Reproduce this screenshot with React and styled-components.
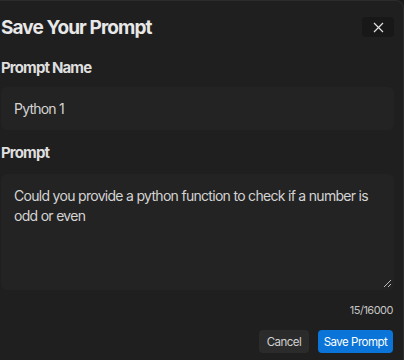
import React from "react";
import styled, { createGlobalStyle } from "styled-components";

const Global = createGlobalStyle`
  html, body { margin: 0; padding: 0; background: #1a1a1a; }
  body { font-family: Inter, "Noto Sans", sans-serif; overflow: hidden; }
  * { box-sizing: border-box; }
`;

const Dialog = styled.div`
  width: 404px;
  height: 360px;
  background: #1f1f1f;
  border-top: 1px solid #2c2c2c;
  border-right: 1px solid #2c2c2c;
  border-top-right-radius: 8px;
  padding: 15px 9px 0 1px;
  display: flex;
  flex-direction: column;
  color: #e6e6e6;
`;

const Header = styled.div`
  display: flex;
  align-items: center;
  justify-content: space-between;
  height: 22px;
`;

const Title = styled.h2`
  margin: 0;
  font-size: 19px;
  font-weight: 700;
  letter-spacing: -0.9px;
  color: #e8e8e8;
`;

const CloseButton = styled.button`
  width: 32px;
  height: 20px;
  border: none;
  border-radius: 4px;
  background: #181818;
  display: flex;
  align-items: center;
  justify-content: center;
  padding: 0;
  color: #d8d8d8;
`;

const Label = styled.div`
  font-size: 15px;
  font-weight: 700;
  letter-spacing: -0.85px;
  color: #dedede;
  margin-top: ${(p) => p.$top}px;
  line-height: 18px;
`;

const Input = styled.div`
  margin-top: 10px;
  height: 43px;
  background: #232323;
  border-radius: 6px;
  display: flex;
  align-items: center;
  padding: 0 13px;
  font-size: 14px;
  letter-spacing: -0.8px;
  color: #d4d4d4;
`;

const TextArea = styled.div`
  position: relative;
  margin-top: 12px;
  height: 116px;
  background: #232323;
  border-radius: 6px;
  padding: 12px 13px;
  font-size: 14px;
  line-height: 20px;
  letter-spacing: -0.7px;
  color: #d4d4d4;
`;

const Grip = styled.svg`
  position: absolute;
  right: 2px;
  bottom: 2px;
`;

const Counter = styled.div`
  margin-top: 13px;
  text-align: right;
  font-size: 11px;
  letter-spacing: -0.5px;
  color: #c4c4c4;
  padding-right: 1px;
`;

const Actions = styled.div`
  margin-top: 13px;
  display: flex;
  justify-content: flex-end;
  align-items: center;
  gap: 9px;
  padding-right: 1px;
`;

const Button = styled.button`
  height: 23px;
  border: none;
  border-radius: 4px;
  font-family: inherit;
  font-size: 11.5px;
  letter-spacing: -0.5px;
  width: ${(p) => (p.$primary ? 75 : 50)}px;
  padding: 0;
  background: ${(p) => (p.$primary ? "#0a74d8" : "#2b2b2b")};
  color: ${(p) => (p.$primary ? "#ffffff" : "#d0d0d0")};
`;

export default function App() {
  return (
    <>
      <Global />
      <Dialog>
        <Header>
          <Title>Save Your Prompt</Title>
          <CloseButton aria-label="Close">
            <svg width="11" height="11" viewBox="0 0 11 11">
              <path d="M1 1L10 10M10 1L1 10" stroke="#e0e0e0" strokeWidth="1.2" />
            </svg>
          </CloseButton>
        </Header>
        <Label $top={21}>Prompt Name</Label>
        <Input>Python 1</Input>
        <Label $top={14}>Prompt</Label>
        <TextArea>
          Could you provide a python function to check if a number is odd or even
          <Grip width="9" height="9" viewBox="0 0 9 9">
            <path d="M1 8L8 1M5 8L8 5" stroke="#bdbdbd" strokeWidth="1" />
          </Grip>
        </TextArea>
        <Counter>15/16000</Counter>
        <Actions>
          <Button>Cancel</Button>
          <Button $primary>Save Prompt</Button>
        </Actions>
      </Dialog>
    </>
  );
}
